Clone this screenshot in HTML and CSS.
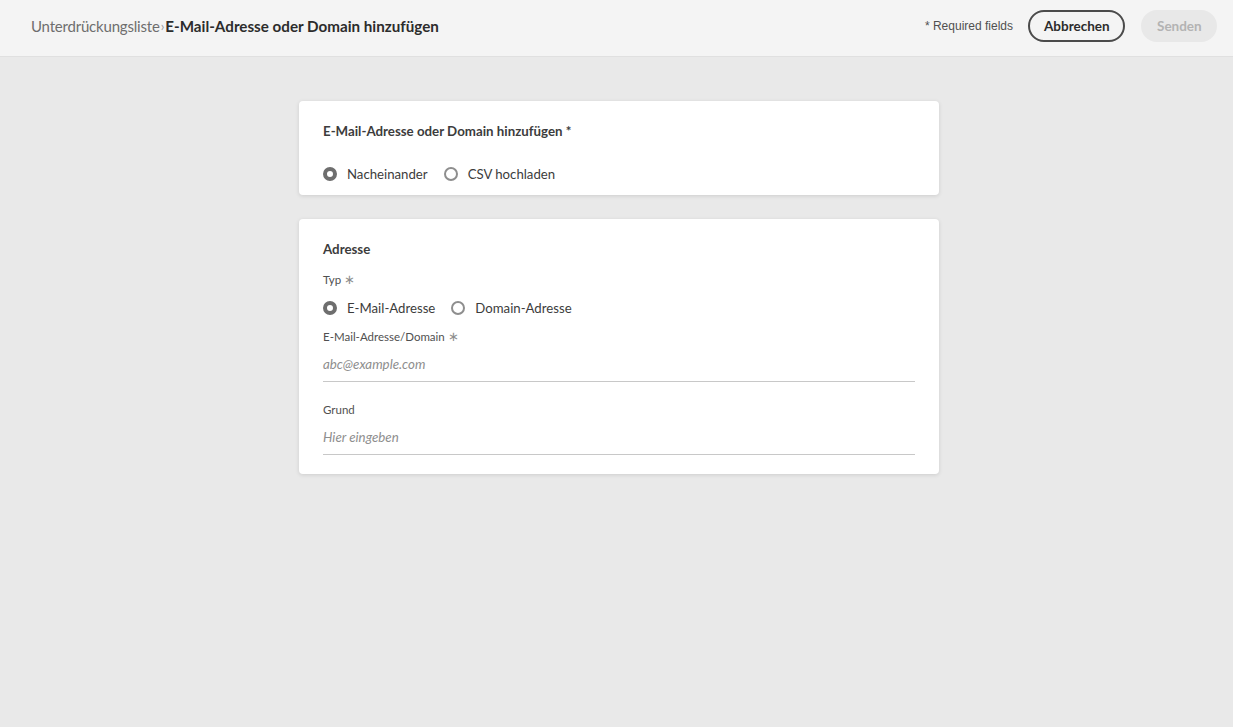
FILE: index.html
```html
<!DOCTYPE html>
<html lang="de">
<head>
<meta charset="utf-8">
<title>E-Mail-Adresse oder Domain hinzufügen</title>
<link rel="stylesheet" href="styles.css">
</head>
<body>
<header class="topbar">
  <nav class="crumbs">
    <span class="crumb-parent">Unterdrückungsliste</span>
    <span class="crumb-sep">›</span>
    <span class="crumb-current">E-Mail-Adresse oder Domain hinzufügen</span>
  </nav>
  <div class="actions">
    <span class="req-note">* Required fields</span>
    <button class="btn btn-outline">Abbrechen</button>
    <button class="btn btn-disabled">Senden</button>
  </div>
</header>
<main class="content">
  <section class="card card-mode">
    <h2 class="card-title">E-Mail-Adresse oder Domain hinzufügen *</h2>
    <div class="radio-row">
      <label class="radio"><span class="dot checked"></span>Nacheinander</label>
      <label class="radio"><span class="dot"></span>CSV hochladen</label>
    </div>
  </section>
  <section class="card card-address">
    <h2 class="card-title">Adresse</h2>
    <div class="field-label">Typ <span class="star">∗</span></div>
    <div class="radio-row radio-row-type">
      <label class="radio"><span class="dot checked"></span>E-Mail-Adresse</label>
      <label class="radio"><span class="dot"></span>Domain-Adresse</label>
    </div>
    <div class="field-label field-label-email">E-Mail-Adresse/Domain <span class="star">∗</span></div>
    <div class="input">abc@example.com</div>
    <div class="field-label field-label-grund">Grund</div>
    <div class="input">Hier eingeben</div>
  </section>
</main>
</body>
</html>
```

FILE: styles.css
```css
* { box-sizing: border-box; }
html, body { margin: 0; padding: 0; }
body {
  background: #e9e9e9;
  font-family: "Lato", "Open Sans", sans-serif;
  color: #4b4b4b;
  height: 727px;
}
.topbar {
  height: 57px;
  background: #f4f4f4;
  border-bottom: 1px solid #e0e0e0;
  display: flex;
  align-items: center;
  justify-content: space-between;
  padding: 0 16px 0 31px;
}
.crumbs { display: flex; align-items: center; font-size: 15px; padding-bottom: 5px; }
.crumb-parent { color: #6e6e6e; letter-spacing: -0.2px; }
.crumb-sep { color: #9a9a9a; font-size: 13px; margin: 0 1px; }
.crumb-current { color: #2c2c2c; font-weight: 700; font-size: 15.2px; }
.actions { display: flex; align-items: center; padding-bottom: 4px; }
.req-note {
  font-family: "Liberation Sans", Arial, sans-serif;
  font-size: 12px;
  color: #505050;
  margin-right: 15px;
  padding-bottom: 0;
}
.btn {
  height: 32px;
  border-radius: 16px;
  font-family: "Lato", sans-serif;
  font-weight: 700;
  font-size: 13.5px;
  padding: 0 14px;
}
.btn-outline {
  width: 97px;
  background: transparent;
  border: 2px solid #4b4b4b;
  color: #2c2c2c;
  margin-right: 16px;
}
.btn-disabled {
  width: 76px;
  background: #e8e8e8;
  border: 2px solid #e8e8e8;
  color: #b3b3b3;
}
.content {
  display: flex;
  flex-direction: column;
  align-items: center;
  padding-top: 44px;
  padding-left: 5px;
  gap: 24px;
}
.card {
  width: 640px;
  background: #fff;
  border-radius: 4px;
  box-shadow: 0 1px 4px rgba(0,0,0,0.12);
  padding: 0 24px;
}
.card-mode { height: 94px; padding-top: 21px; }
.card-address { height: 255px; padding-top: 21px; }
.card-title {
  margin: 0;
  font-size: 13.3px;
  font-weight: 700;
  color: #3c3c3c;
  line-height: 18px;
}
.radio-row { display: flex; align-items: center; gap: 16px; margin-top: 25px; }
.radio {
  display: flex;
  align-items: center;
  font-size: 13.2px;
  color: #3c3c3c;
  line-height: 18px;
}
.dot {
  width: 14px;
  height: 14px;
  border-radius: 50%;
  border: 2px solid #8e8e8e;
  background: #fff;
  margin-right: 10px;
}
.dot.checked {
  border: 4.5px solid #6e6e6e;
  background: #fff;
}
.field-label {
  font-size: 11.5px;
  color: #505050;
  line-height: 16px;
  margin-top: 13px;
}
.star { color: #8e8e8e; font-size: 13px; }
.radio-row-type { margin-top: 11px; }
.field-label-email { margin-top: 11px; }
.field-label-grund { margin-top: 20px; }
.input {
  font-size: 13.3px;
  font-style: italic;
  color: #8e8e8e;
  line-height: 18px;
  padding: 10px 0 8px;
  border-bottom: 1px solid #c8c8c8;
}
```
